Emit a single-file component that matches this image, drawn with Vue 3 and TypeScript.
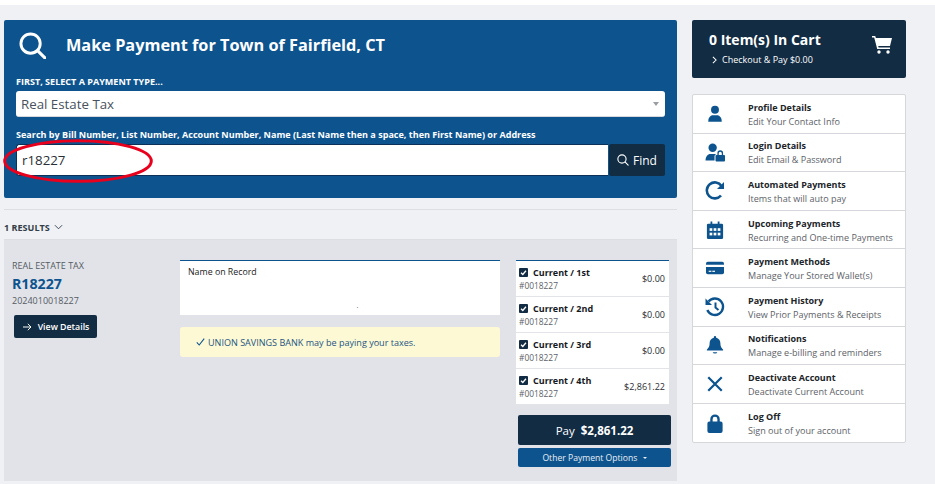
<script setup lang="ts">
const menu = [
  { icon: 'user', title: 'Profile Details', sub: 'Edit Your Contact Info' },
  { icon: 'userlock', title: 'Login Details', sub: 'Edit Email & Password' },
  { icon: 'redo', title: 'Automated Payments', sub: 'Items that will auto pay' },
  { icon: 'calendar', title: 'Upcoming Payments', sub: 'Recurring and One-time Payments' },
  { icon: 'card', title: 'Payment Methods', sub: 'Manage Your Stored Wallet(s)' },
  { icon: 'history', title: 'Payment History', sub: 'View Prior Payments & Receipts' },
  { icon: 'bell', title: 'Notifications', sub: 'Manage e-billing and reminders' },
  { icon: 'times', title: 'Deactivate Account', sub: 'Deactivate Current Account' },
  { icon: 'lock', title: 'Log Off', sub: 'Sign out of your account' },
]

const bills = [
  { name: 'Current / 1st', amount: '$0.00' },
  { name: 'Current / 2nd', amount: '$0.00' },
  { name: 'Current / 3rd', amount: '$0.00' },
  { name: 'Current / 4th', amount: '$2,861.22' },
]
</script>

<template>
  <div class="page">
    <main class="main">
      <section class="search-panel">
        <div class="panel-head">
          <svg class="big-search" viewBox="0 0 28 28" fill="none" stroke="#fff">
            <circle cx="12" cy="12" r="10" stroke-width="3" />
            <path d="M19.5 19.5L27 27" stroke-width="3.2" stroke-linecap="round" />
          </svg>
          <h1>Make Payment for Town of Fairfield, CT</h1>
        </div>
        <label class="type-label">FIRST, SELECT A PAYMENT TYPE...</label>
        <div class="select">
          <span>Real Estate Tax</span>
          <i class="caret"></i>
        </div>
        <label class="search-label">Search by Bill Number, List Number, Account Number, Name (Last Name then a space, then First Name) or Address</label>
        <div class="search-row">
          <div class="search-input">r18227</div>
          <button class="find">
            <svg viewBox="0 0 14 14" fill="none" stroke="#fff" stroke-width="1.3">
              <circle cx="5.8" cy="5.8" r="4.8" />
              <path d="M9.3 9.3L13 13" stroke-linecap="round" />
            </svg>
            Find
          </button>
        </div>
        <svg class="red-ring" viewBox="0 0 150 44" fill="none">
          <ellipse cx="75" cy="22" rx="73.3" ry="20.3" stroke="#e8001c" stroke-width="3" />
        </svg>
      </section>

      <div class="results-bar">
        <span>1 RESULTS</span>
        <svg viewBox="0 0 10 6" fill="none" stroke="#2c3a47" stroke-width="1">
          <path d="M1 1l4 4 4-4" />
        </svg>
      </div>

      <section class="result">
        <div class="bill-info">
          <div class="bill-type">REAL ESTATE TAX</div>
          <div class="bill-no">R18227</div>
          <div class="bill-id">2024010018227</div>
          <button class="details">
            <svg viewBox="0 0 12 10" fill="none" stroke="#fff" stroke-width="1.2">
              <path d="M1 5h10M7 1l4 4-4 4" />
            </svg>
            View Details
          </button>
        </div>

        <div class="bill-mid">
          <div class="record">
            <div>Name on Record</div>
            <div class="record-dot">.</div>
          </div>
          <div class="notice">
            <svg class="tick" viewBox="0 0 9 8" fill="none" stroke="#0d548f" stroke-width="1.1">
              <path d="M0.8 4.4l2.4 2.6 5-6.400" />
            </svg>
            <span>UNION SAVINGS BANK may be paying your taxes.</span>
          </div>
        </div>

        <div class="bill-pay">
          <ul class="installments">
            <li v-for="b in bills" :key="b.name">
              <div class="inst-left">
                <div class="inst-name">
                  <span class="check">
                    <svg viewBox="0 0 8 8" fill="none" stroke="#fff" stroke-width="1.5">
                      <path d="M1.2 4.2l2 2 3.6-4.2" />
                    </svg>
                  </span>
                  {{ b.name }}
                </div>
                <div class="inst-id">#0018227</div>
              </div>
              <div class="inst-amt">{{ b.amount }}</div>
            </li>
          </ul>
          <button class="pay">Pay <b>$2,861.22</b></button>
          <button class="other">Other Payment Options <i class="other-caret"></i></button>
        </div>
      </section>
    </main>

    <aside class="side">
      <div class="cart">
        <div class="cart-text">
          <div class="cart-title">0 Item(s) In Cart</div>
          <div class="cart-sub">
            <svg viewBox="0 0 6 10" fill="none" stroke="#fff" stroke-width="1.3">
              <path d="M1 1l4 4-4 4" />
            </svg>
            Checkout &amp; Pay $0.00
          </div>
        </div>
        <svg class="cart-icon" viewBox="0 0 20 18" fill="#fff">
          <path d="M0 0h3.2l.7 2H20l-2 8H6.2l.4 1.6H18V13H5.2L2.2 1.5H0z" />
          <circle cx="7" cy="16" r="1.7" />
          <circle cx="16" cy="16" r="1.7" />
        </svg>
      </div>

      <ul class="menu">
        <li v-for="m in menu" :key="m.title">
          <span class="menu-icon" :class="'ic-' + m.icon">
            <svg v-if="m.icon === 'user'" viewBox="0 0 20 20" fill="#0d548f">
              <circle cx="10" cy="5.2" r="4.4" />
              <path d="M2.5 18.5c0-4.5 2.5-7 5-7h5c2.5 0 5 2.5 5 7z" />
            </svg>
            <svg v-else-if="m.icon === 'userlock'" viewBox="0 0 22 20" fill="#0d548f">
              <circle cx="8" cy="5" r="4.4" />
              <path d="M0.5 18.5c0-4.5 2.5-7 5-7h6l-1.500 2v5z" />
              <path d="M12 12.500h1v-1.800a3 3 0 0 1 6 0v1.800h1a1 1 0 0 1 1 1v5a1 1 0 0 1-1 1h-8a1 1 0 0 1-1-1v-5a1 1 0 0 1 1-1zm2.400 0h3.200v-1.800a1.600 1.600 0 0 0-3.200 0z" fill-rule="evenodd" />
            </svg>
            <svg v-else-if="m.icon === 'redo'" viewBox="0 0 20 20" fill="none" stroke="#0d548f" stroke-width="2.600">
              <path d="M16 14.500A8 8 0 1 1 16.500 5" />
              <path d="M19 1v7h-7z" fill="#0d548f" stroke="none" />
            </svg>
            <svg v-else-if="m.icon === 'calendar'" viewBox="0 0 18 20" fill="#0d548f">
              <path d="M4 0.500h2V3h6V0.500h2V3h2.500A1.500 1.500 0 0 1 18 4.500v14a1.500 1.500 0 0 1-1.500 1.500h-15A1.500 1.500 0 0 1 0 18.500v-14A1.500 1.500 0 0 1 1.500 3H4z" />
              <g fill="#fff">
                <rect x="3" y="8" width="3" height="3" /><rect x="7.500" y="8" width="3" height="3" /><rect x="12" y="8" width="3" height="3" />
                <rect x="3" y="13" width="3" height="3" /><rect x="7.500" y="13" width="3" height="3" /><rect x="12" y="13" width="3" height="3" />
              </g>
            </svg>
            <svg v-else-if="m.icon === 'card'" viewBox="0 0 20 16" fill="#0d548f">
              <path d="M2 1h16a2 2 0 0 1 2 2v1.500H0V3a2 2 0 0 1 2-2z" />
              <path d="M0 7h20v6a2 2 0 0 1-2 2H2a2 2 0 0 1-2-2z" />
              <rect x="3" y="11" width="3" height="1.300" fill="#fff" /><rect x="7" y="11" width="3" height="1.300" fill="#fff" />
            </svg>
            <svg v-else-if="m.icon === 'history'" viewBox="0 0 20 20" fill="none" stroke="#0d548f" stroke-width="2.400">
              <path d="M3.500 4.500A8.200 8.200 0 1 1 2.300 13" />
              <path d="M0.500 1.500v6.500h6.500z" fill="#0d548f" stroke="none" />
              <path d="M10.500 5.500v5l3 2.500" stroke-width="2" />
            </svg>
            <svg v-else-if="m.icon === 'bell'" viewBox="0 0 18 20" fill="#0d548f">
              <path d="M9 0a1.300 1.300 0 0 1 1.300 1.300v.7c3 .6 4.700 3 4.700 6 0 4 1.200 5 3 7v1H0v-1c1.800-2 3-3 3-7 0-3 1.700-5.400 4.700-6v-.7A1.300 1.300 0 0 1 9 0z" />
              <path d="M6.500 18h5a2.500 1.500 0 0 1-5 0z" />
            </svg>
            <svg v-else-if="m.icon === 'times'" viewBox="0 0 16 16" fill="none" stroke="#0d548f" stroke-width="2">
              <path d="M2 2l12 12M14 2L2 14" />
            </svg>
            <svg v-else viewBox="0 0 16 20" fill="#0d548f" fill-rule="evenodd">
              <path d="M3 8V5.500a5 5 0 0 1 10 0V8h1a2 2 0 0 1 2 2v8a2 2 0 0 1-2 2H2a2 2 0 0 1-2-2v-8a2 2 0 0 1 2-2zm2.500 0h5V5.500a2.500 2.500 0 0 0-5 0z" />
            </svg>
          </span>
          <span class="menu-text">
            <span class="menu-title">{{ m.title }}</span>
            <span class="menu-sub">{{ m.sub }}</span>
          </span>
        </li>
      </ul>
    </aside>
  </div>
</template>

<style scoped>
.page {
  box-sizing: border-box;
  width: 935px;
  height: 479px;
  overflow: hidden;
  margin-top: 5px;
  padding: 15px 0 0 4px;
  background: #f0f1f5;
  display: flex;
  align-items: flex-start;
  gap: 15px;
  font-family: "Open Sans", sans-serif;
  color: #212529;
}
.main {
  width: 673px;
  flex: none;
}
.search-panel {
  position: relative;
  box-sizing: border-box;
  height: 178px;
  padding: 9px 12px 0 12px;
  background: #0d548f;
  border-radius: 2px;
  color: #fff;
}
.panel-head {
  display: flex;
  align-items: center;
  height: 32px;
  margin-left: 3px;
}
.big-search {
  width: 27px;
  height: 27px;
  flex: none;
}
.panel-head h1 {
  margin: 0 0 0 20px;
  font-size: 16.3px;
  line-height: 22px;
  font-weight: 700;
}
.type-label {
  display: block;
  margin-top: 14px;
  font-size: 9.05px;
  line-height: 13px;
  font-weight: 700;
}
.select {
  display: flex;
  align-items: center;
  justify-content: space-between;
  box-sizing: border-box;
  height: 26px;
  margin-top: 3px;
  padding: 0 6px 0 5px;
  background: #fff;
  border-radius: 3px;
  border-bottom: 1px solid #d5d8dd;
  color: #47525d;
  font-size: 13.3px;
}
.caret {
  width: 0;
  height: 0;
  border-left: 3.5px solid transparent;
  border-right: 3.5px solid transparent;
  border-top: 4px solid #9a9ea3;
}
.search-label {
  display: block;
  margin-top: 11px;
  font-size: 9.05px;
  line-height: 13px;
  font-weight: 700;
}
.search-row {
  display: flex;
  margin-top: 3px;
  height: 32px;
}
.search-input {
  box-sizing: border-box;
  width: 592px;
  flex: none;
  height: 32px;
  padding: 0 5px;
  background: #fff;
  border: 1px solid #0b3158;
  border-width: 1px 0 1px 1px;
  border-radius: 3px 0 0 3px;
  color: #2a2f35;
  font-size: 13.3px;
  line-height: 30px;
}
.find {
  box-sizing: border-box;
  width: 56px;
  height: 32px;
  margin-left: 1px;
  padding: 0;
  display: flex;
  align-items: center;
  justify-content: center;
  gap: 4px;
  border: 0;
  border-radius: 2px;
  background: #122c44;
  color: #fff;
  font: 12px "Open Sans", sans-serif;
}
.find svg {
  width: 12px;
  height: 12px;
}
.red-ring {
  position: absolute;
  left: -1px;
  top: 119px;
  width: 150px;
  height: 44px;
}
.results-bar {
  box-sizing: border-box;
  height: 31px;
  margin-top: 11px;
  padding-top: 5px;
  display: flex;
  align-items: center;
  gap: 4px;
  border-top: 1px solid #dcdee1;
  border-bottom: 1px solid #dcdee1;
  font-size: 9.05px;
  font-weight: 700;
  color: #333d47;
}
.results-bar svg {
  width: 9px;
  height: 6px;
}
.result {
  box-sizing: border-box;
  height: 241px;
  display: flex;
  background: #e1e3e9;
  padding: 20px 0 0 8px;
}
.bill-info {
  width: 168px;
  flex: none;
}
.bill-type {
  font-size: 9px;
  line-height: 12px;
  color: #555b62;
}
.bill-no {
  font-size: 14.2px;
  line-height: 19px;
  font-weight: 700;
  color: #0d548f;
  margin-top: 2px;
}
.bill-id {
  font-size: 9px;
  line-height: 13px;
  color: #555b62;
  margin-top: 1px;
}
.details {
  display: flex;
  align-items: center;
  justify-content: center;
  gap: 6px;
  box-sizing: border-box;
  width: 83px;
  height: 23px;
  margin: 8px 0 0 2px;
  padding: 0;
  border: 0;
  border-radius: 2px;
  background: #122c44;
  color: #fff;
  font: 600 8.8px "Open Sans", sans-serif;
}
.details svg {
  width: 10px;
  height: 8px;
}
.bill-mid {
  width: 320px;
  flex: none;
}
.record {
  box-sizing: border-box;
  height: 55px;
  padding: 5px 8px 0;
  background: #fff;
  border-top: 1px solid #0d548f;
  font-size: 8.8px;
  line-height: 13px;
  color: #222;
}
.record-dot {
  text-align: center;
  font-size: 7px;
  line-height: 8px;
  margin-top: 23px;
  margin-left: 35px;
  color: #555;
}
.notice {
  box-sizing: border-box;
  height: 30px;
  margin-top: 12px;
  padding-left: 16px;
  display: flex;
  align-items: center;
  gap: 3px;
  background: #fdf9d4;
  border-radius: 3px;
  color: #1c5585;
  font-size: 9.05px;
}
.tick {
  width: 9px;
  height: 8px;
  flex: none;
}
.bill-pay {
  width: 153px;
  flex: none;
  margin-left: 16px;
}
.installments {
  list-style: none;
  margin: 0;
  padding: 0;
  border-top: 1px solid #0d548f;
}
.installments li {
  box-sizing: border-box;
  height: 36px;
  display: flex;
  align-items: center;
  justify-content: space-between;
  padding: 0 4px 0 3px;
  background: #fff;
  border-bottom: 1px solid #e3e4e7;
}
.inst-name {
  display: flex;
  align-items: center;
  gap: 5px;
  font-size: 9px;
  line-height: 13px;
  font-weight: 700;
  color: #16191d;
}
.check {
  display: flex;
  align-items: center;
  justify-content: center;
  width: 9px;
  height: 9px;
  background: #122c44;
  border-radius: 1px;
}
.check svg {
  width: 7px;
  height: 7px;
}
.inst-id {
  margin-top: 1px;
  font-size: 8.4px;
  line-height: 12px;
  color: #5d6268;
}
.inst-amt {
  font-size: 9.05px;
  color: #2a2e33;
}
.pay {
  display: block;
  box-sizing: border-box;
  width: 153px;
  height: 30px;
  margin: 10px 0 0 2px;
  padding: 0;
  border: 0;
  border-radius: 2px;
  background: #122c44;
  color: #fff;
  font: 11.5px "Open Sans", sans-serif;
}
.pay b {
  margin-left: 3px;
}
.other {
  display: block;
  box-sizing: border-box;
  width: 153px;
  height: 19px;
  margin: 3px 0 0 2px;
  padding: 0;
  border: 0;
  border-radius: 2px;
  background: #0d548f;
  color: #e8eef4;
  font: 8.6px "Open Sans", sans-serif;
}
.other-caret {
  display: inline-block;
  width: 0;
  height: 0;
  margin-left: 3px;
  vertical-align: 2px;
  border-left: 2px solid transparent;
  border-right: 2px solid transparent;
  border-top: 2px solid #e8eef4;
}
.side {
  width: 214px;
  flex: none;
}
.cart {
  box-sizing: border-box;
  height: 58px;
  padding: 10px 14px 0 17px;
  display: flex;
  justify-content: space-between;
  background: #122c44;
  border-radius: 2px;
  color: #fff;
}
.cart-title {
  font-size: 14px;
  line-height: 19px;
  font-weight: 700;
}
.cart-sub {
  display: flex;
  align-items: center;
  gap: 5px;
  margin: 4px 0 0 3px;
  font-size: 9px;
  line-height: 13px;
}
.cart-sub svg {
  width: 5px;
  height: 8px;
}
.cart-icon {
  width: 20px;
  height: 18px;
  margin-top: 6px;
}
.menu {
  list-style: none;
  margin: 16px 0 0;
  padding: 0;
  background: #fff;
  border: 1px solid #d5d7db;
  border-radius: 2px;
}
.menu li {
  box-sizing: border-box;
  height: 38.6px;
  display: flex;
  align-items: center;
  border-bottom: 1px solid #d5d7db;
}
.menu li:last-child {
  border-bottom: 0;
}
.menu-icon {
  width: 44px;
  margin-right: 11px;
  flex: none;
  display: flex;
  justify-content: center;
}
.menu-icon svg {
  width: 18px;
  height: 18px;
}
.ic-userlock svg {
  width: 21px;
  height: 19px;
}
.ic-redo svg,
.ic-history svg {
  width: 20px;
  height: 20px;
}
.ic-lock svg {
  height: 19px;
}
.menu-text {
  display: flex;
  flex-direction: column;
  padding-top: 1px;
}
.menu-title {
  font-size: 9px;
  line-height: 13px;
  font-weight: 700;
  color: #212529;
}
.menu-sub {
  margin-top: 1px;
  font-size: 9.05px;
  line-height: 13px;
  color: #5d6268;
}
</style>

<style>
body {
  background: #fff;
}
</style>
